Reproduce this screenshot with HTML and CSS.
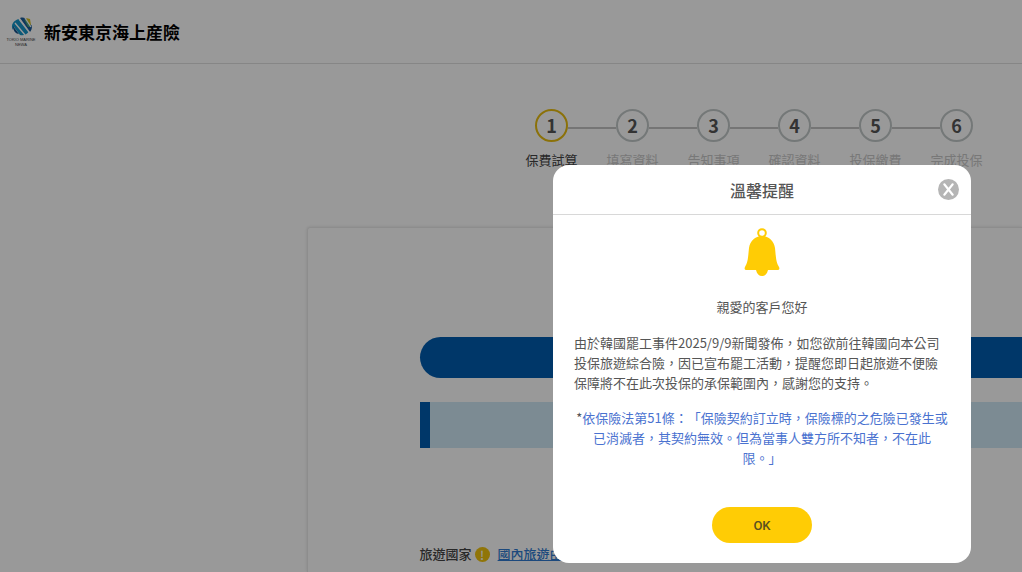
FILE: index.html
```html
<!DOCTYPE html>
<html lang="zh-Hant">
<head>
    <meta charset="UTF-8">
    <meta name="viewport" content="width=device-width, initial-scale=1.0">
    <title>新安東京海上產險</title>
    <link rel="stylesheet" href="styles.css">
</head>
<body>
    <header class="site-header">
        <svg class="logo" viewBox="0 0 32 30" aria-hidden="true">
            <path d="M8 13C5 8 9 3 14 2L24 14C22 18 18 19 15 18L9 10Z" fill="#1595c8"/>
            <path d="M15 1C18 0 21 1 22 3L27 9C27 12 26 14 25 15Z" fill="#1b5d9b"/>
            <path d="M21 1L25 2L26 8L24 7Z" fill="#d8c020"/>
            <path d="M19 2L23 5L26 10L23 10Z" fill="#45a079"/>
            <path d="M8 9L14 17C11 17 8 14 8 9Z" fill="#15518c"/>
            <path d="M10 6L20 18M14 2L24 15M20 1L26 10" stroke="#fff" stroke-width="1.3"/>
            <text class="logo-text" x="16" y="24" text-anchor="middle">TOKIO MARINE</text>
            <text class="logo-text" x="16" y="29" text-anchor="middle">NEWA</text>
        </svg>
        <span class="brand">新安東京海上産險</span>
    </header>

    <main>
        <ol class="steps">
            <li class="step active"><span class="num">1</span><span class="name">保費試算</span></li>
            <li class="step"><span class="num">2</span><span class="name">填寫資料</span></li>
            <li class="step"><span class="num">3</span><span class="name">告知事項</span></li>
            <li class="step"><span class="num">4</span><span class="name">確認資料</span></li>
            <li class="step"><span class="num">5</span><span class="name">投保繳費</span></li>
            <li class="step"><span class="num">6</span><span class="name">完成投保</span></li>
        </ol>

        <section class="card">
            <div class="title-bar"></div>
            <div class="notice"></div>
            <div class="field">
                <span>旅遊國家</span>
                <span class="hint">!</span>
                <a href="#">國內旅遊由此去</a>
            </div>
        </section>
    </main>

    <div class="overlay">
        <div class="modal" role="dialog" aria-modal="true" aria-labelledby="modal-title">
            <div class="modal-header">
                <h2 id="modal-title">溫馨提醒</h2>
                <button class="close" type="button" aria-label="關閉">
                    <svg viewBox="0 0 20 20">
                        <circle cx="10" cy="10" r="10" fill="#b5b5b5"/>
                        <path d="M6 5L14 15M14 5L6 15" stroke="#fff" stroke-width="2" stroke-linecap="round"/>
                    </svg>
                </button>
            </div>
            <div class="modal-body">
                <svg class="bell" viewBox="0 0 36 48" aria-hidden="true">
                    <circle cx="18" cy="5" r="3.8" fill="none" stroke="#ffcc05" stroke-width="2"/>
                    <path d="M18 8C25 8 30 13 31 20C32 30 32 34 35 39C36 41 35 42 33 42H24C23 46 21 48 18 48C15 48 13 46 12 42H3C1 42 0 41 1 39C4 34 4 30 5 20C6 13 11 8 18 8Z" fill="#ffcc05"/>
                </svg>
                <p class="greeting">親愛的客戶您好</p>
                <p class="message">由於韓國罷工事件2025/9/9新聞發佈，如您欲前往韓國向本公司投保旅遊綜合險，因已宣布罷工活動，提醒您即日起旅遊不便險保障將不在此次投保的承保範圍內，感謝您的支持。</p>
                <p class="law">*<span>依保險法第51條：「保險契約訂立時，保險標的之危險已發生或已消滅者，其契約無效。但為當事人雙方所不知者，不在此限。」</span></p>
                <button class="ok" type="button">OK</button>
            </div>
        </div>
    </div>
</body>
</html>
```
FILE: styles.css
```css
* {
    box-sizing: border-box;
}
body {
    display: flex;
    flex-direction: column;
    margin: 0;
    min-height: 100vh;
    background: #fff;
    color: #555;
    font-family: "Noto Sans CJK TC", "Noto Sans", sans-serif;
    font-size: 13px;
    line-height: 20px;
    text-spacing-trim: space-all;
}
p, h2 {
    margin: 0;
}
.site-header {
    display: flex;
    align-items: center;
    gap: 7px;
    height: 64px;
    padding-left: 5px;
    border-bottom: 1px solid #e0e0e0;
}
.logo {
    width: 32px;
    height: 30px;
}
.logo-text {
    font-family: "Liberation Sans", sans-serif;
    font-size: 4px;
    fill: #444;
}
.brand {
    color: #000;
    font-size: 17px;
    font-weight: 700;
}

/* steps */
main {
    display: flex;
    flex: 1;
    flex-direction: column;
}
.steps {
    display: flex;
    justify-content: flex-end;
    margin: 0;
    padding: 45px 25px 0 0;
    list-style: none;
}
.step {
    display: grid;
    grid-template-columns: 1fr 33px 1fr;
    align-items: center;
    row-gap: 8px;
    width: 81px;
    color: #c8c8c8;
    text-align: center;
}
.step::before,
.step::after {
    content: "";
    grid-row: 1;
    height: 2px;
    margin-top: 4px;
    background: #c4c4c4;
}
.step::before {
    grid-column: 1;
}
.step::after {
    grid-column: 3;
}
.step:first-child::before,
.step:last-child::after {
    background: none;
}
.num {
    grid-column: 2;
    grid-row: 1;
    height: 33px;
    border: 2px solid #c2c8c8;
    border-radius: 50%;
    color: #555;
    font-size: 18px;
    font-weight: 700;
    line-height: 29px;
}
.name {
    grid-column: 1 / -1;
}
.active {
    color: #444;
}
.active .num {
    border-color: #e8bd10;
}

/* form card */
.card {
    flex: 1;
    margin: 57px 0 0 30%;
    padding: 109px 0 0 112px;
    border: solid #ececec;
    border-width: 1px 0 0 1px;
    border-radius: 3px 0 0;
    box-shadow: 0 0 3px rgba(0, 0, 0, 0.12);
}
.title-bar {
    height: 41px;
    border-radius: 21px 0 0 21px;
    background: #005caf;
}
.notice {
    height: 46px;
    margin-top: 24px;
    border-left: 10px solid #005caf;
    background: #cfe8f5;
}
.field {
    display: flex;
    align-items: center;
    margin-top: 96px;
    color: #444;
    font-weight: 500;
}
.hint {
    width: 15px;
    height: 15px;
    margin: 0 8px 0 3px;
    border-radius: 50%;
    background: #f0c30f;
    color: #fff;
    font-size: 12px;
    line-height: 15px;
    text-align: center;
}
.field a {
    color: #2f7bd0;
}

/* modal */
.overlay {
    position: fixed;
    inset: 0;
    display: flex;
    justify-content: flex-end;
    align-items: flex-end;
    padding: 0 51px 9px 20px;
    background: rgba(0, 0, 0, 0.4);
}
.modal {
    width: 100%;
    max-width: 418px;
    border-radius: 16px;
    background: #fff;
}
.modal-header {
    display: grid;
    grid-template-columns: 1fr auto 1fr;
    align-items: center;
    height: 50px;
    padding: 0 12px;
    border-bottom: 1px solid #d8d8d8;
}
.modal-header h2 {
    grid-column: 2;
    font-size: 16px;
    font-weight: 500;
}
.close {
    justify-self: end;
    width: 21px;
    height: 21px;
    padding: 0;
    border: none;
    background: none;
    cursor: pointer;
}
.close svg {
    display: block;
}
.modal-body {
    display: flex;
    flex-direction: column;
    align-items: center;
    padding: 13px 21px 20px;
}
.bell {
    width: 36px;
    height: 48px;
}
.greeting {
    margin-top: 21px;
}
.message {
    margin-top: 16px;
}
.law {
    margin-top: 15px;
    text-align: center;
}
.law span {
    color: #4a72d0;
}
.ok {
    width: 100px;
    height: 36px;
    margin-top: 39px;
    border: none;
    border-radius: 18px;
    background: #ffcc05;
    color: #5a5020;
    font-family: Roboto, sans-serif;
    font-size: 13px;
    font-weight: 500;
    cursor: pointer;
}
```
